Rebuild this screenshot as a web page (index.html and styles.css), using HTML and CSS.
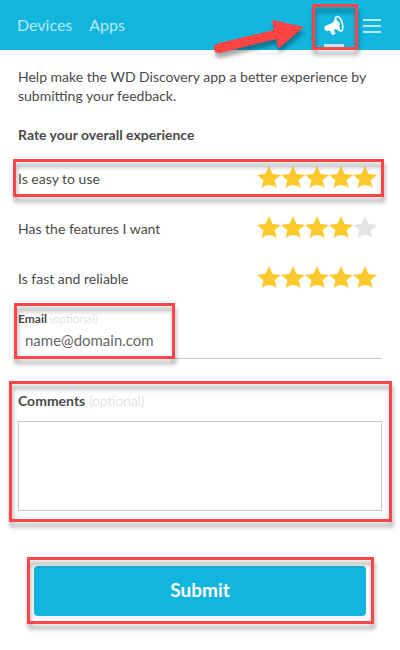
FILE: index.html
```html
<!DOCTYPE html>
<html lang="en">
<head>
    <meta charset="UTF-8">
    <meta name="viewport" content="width=device-width, initial-scale=1">
    <title>WD Discovery</title>
    <link rel="stylesheet" href="styles.css">
</head>
<body>
<header class="topbar">
    <nav class="tabs">
        <a href="#devices">Devices</a>
        <a href="#apps">Apps</a>
    </nav>
    <div class="tools">
        <a class="feedback_link marked" href="#feedback" aria-label="Feedback">
            <svg class="megaphone" viewBox="0 0 20 21" width="20" height="21" aria-hidden="true">
                <ellipse cx="15" cy="8.800" rx="3.400" ry="7.600" transform="rotate(-16 15 8.800)" fill="#12b5dd" stroke="#fff" stroke-width="1.500"/>
                <path fill="#fff" d="M11.800 1.800Q12.200 4.500 13.600 6.600C15.600 6.200 16.800 9.500 15.100 11Q15.800 13.500 17 15.800Q13 13.800 9.800 14.400L11.500 18.800L8.300 20.200L5.800 15.400L3 15.900C.6 16-.4 12.400 1.300 11L7.500 8.300Q10.500 6.500 11.800 1.800Z"/>
            </svg>
        </a>
        <button class="menu" type="button" aria-label="Menu">
            <span></span><span></span><span></span>
        </button>
    </div>
    <svg class="arrow" viewBox="0 0 94 44" width="94" height="44" aria-hidden="true">
        <path fill="#fe4444" d="M7.500 33.500L64 20L62 9.700L93.700 17L68.300 38.700L66.300 29L10 43C3 44 1.500 35 7.500 33.500Z"/>
    </svg>
</header>
<form class="feedback">
    <p class="intro">Help make the WD Discovery app a better experience by submitting your feedback.</p>
    <h1 class="title">Rate your overall experience</h1>
    <div class="rating marked" role="radiogroup" aria-labelledby="easy">
        <span id="easy">Is easy to use</span>
        <div class="stars">
            <input type="radio" name="easy" value="1" aria-label="1 star">
            <input type="radio" name="easy" value="2" aria-label="2 stars">
            <input type="radio" name="easy" value="3" aria-label="3 stars">
            <input type="radio" name="easy" value="4" aria-label="4 stars">
            <input type="radio" name="easy" value="5" aria-label="5 stars" checked>
        </div>
    </div>
    <div class="rating" role="radiogroup" aria-labelledby="features">
        <span id="features">Has the features I want</span>
        <div class="stars">
            <input type="radio" name="features" value="1" aria-label="1 star">
            <input type="radio" name="features" value="2" aria-label="2 stars">
            <input type="radio" name="features" value="3" aria-label="3 stars">
            <input type="radio" name="features" value="4" aria-label="4 stars" checked>
            <input type="radio" name="features" value="5" aria-label="5 stars">
        </div>
    </div>
    <div class="rating" role="radiogroup" aria-labelledby="fast">
        <span id="fast">Is fast and reliable</span>
        <div class="stars">
            <input type="radio" name="fast" value="1" aria-label="1 star">
            <input type="radio" name="fast" value="2" aria-label="2 stars">
            <input type="radio" name="fast" value="3" aria-label="3 stars">
            <input type="radio" name="fast" value="4" aria-label="4 stars">
            <input type="radio" name="fast" value="5" aria-label="5 stars" checked>
        </div>
    </div>
    <div class="email marked">
        <label for="email">Email <span class="optional">(optional)</span></label>
        <input type="email" id="email" placeholder="name@domain.com">
    </div>
    <div class="comments marked">
        <label for="comments">Comments <span class="optional">(optional)</span></label>
        <textarea id="comments"></textarea>
    </div>
    <div class="submit_area marked">
        <button class="submit" type="submit">Submit</button>
    </div>
</form>
</body>
</html>
```

FILE: styles.css
```css
*, *::after{
    box-sizing: border-box;
}
body{
    margin: 0;
    background-color: white;
    color: #4a4a4a;
    font-family: Lato, "Liberation Sans", sans-serif;
    font-size: 14px;
    line-height: 20px;
}
input, textarea, button{
    font-family: inherit;
    color: inherit;
}
.topbar{
    position: relative;
    display: flex;
    justify-content: space-between;
    height: 50px;
    padding: 0 19px 0 17px;
    background-color: #12b5dd;
}
.tabs{
    display: flex;
    align-items: center;
    gap: 17px;
}
.tabs>a{
    color: #b8e9f5;
    font-size: 16px;
    text-decoration: none;
}
.tools{
    display: flex;
    gap: 18px;
}
.feedback_link{
    display: flex;
    flex-direction: column;
    justify-content: space-between;
    width: 20px;
    height: 47px;
    padding-top: 15px;
    border-bottom: 3px solid #b8e9f5;
}
.menu{
    display: flex;
    flex-direction: column;
    justify-content: center;
    gap: 4px;
    width: 19px;
    padding: 2px 0 0 1px;
    border: 0;
    background: none;
}
.menu>span{
    height: 2px;
    background-color: #b8e9f5;
}

/* red callouts over the marked parts */
.marked{
    position: relative;
}
.marked::after{
    content: "";
    position: absolute;
    z-index: 1;
    border: 3px solid #fe4444;
    filter: drop-shadow(1px 5px 2px rgba(0, 0, 0, .35));
    pointer-events: none;
}
.feedback_link.marked::after{
    inset: 4px -14px -6px -12px;
}
.rating.marked::after{
    inset: 4px -2px 8px -5px;
}
.email.marked::after{
    inset: -6px auto 0 -4px;
    width: 161px;
}
.comments.marked::after{
    inset: -10px -10px -11px -9px;
}
.submit_area.marked::after{
    inset: -9px -8px -8px -7px;
}
.arrow{
    position: absolute;
    top: 10px;
    right: 96px;
    overflow: visible;
    filter: drop-shadow(1px 5px 2px rgba(0, 0, 0, .35));
}

.feedback{
    padding: 17px 18px 34px;
}
.intro{
    margin: 0;
    line-height: 19px;
}
.title{
    margin: 20px 0 10px;
    font-size: 14px;
    line-height: 20px;
    font-weight: bold;
}
.rating{
    display: flex;
    justify-content: space-between;
    height: 50px;
    padding-right: 5px;
    line-height: 48px;
}
.stars{
    display: flex;
    padding-top: 11px;
}
.stars>input{
    appearance: none;
    width: 24px;
    height: 22px;
    margin: 0;
    background-color: #e4e4e4;
    clip-path: path("M12 0L15.500 7.800L24 9L17.600 14.300L19.800 22Q12 16 4.600 22L6.400 14.300L0 9L8.500 7.800Z");
    cursor: pointer;
}
.stars>input:checked, .stars>input:has(~ input:checked){
    background-color: #fdca2e;
}
.email{
    display: flex;
    flex-direction: column;
    margin-top: 4px;
    padding-top: 4px;
}
label{
    font-weight: bold;
}
.email>label{
    font-size: 12px;
    line-height: 12px;
}
.optional{
    color: #d2d2d2;
    font-weight: 300;
}
.email>input{
    height: 34px;
    padding: 0 7px 4px;
    border: 0;
    border-bottom: 1px solid #c8c8c8;
    background: none;
    font-size: 15px;
}
.email>input::placeholder{
    color: #666;
}
.comments{
    display: flex;
    flex-direction: column;
    gap: 10px;
    margin-top: 32px;
}
.comments>textarea{
    height: 90px;
    border: 1px solid #c8c8c8;
    resize: none;
}
.submit_area{
    margin: 55px 16px 0;
}
.submit{
    display: block;
    width: 100%;
    height: 50px;
    padding: 0 0 4px;
    border: 0;
    border-radius: 4px;
    background-color: #12b5dd;
    color: white;
    font-size: 19px;
    font-weight: bold;
}
```
